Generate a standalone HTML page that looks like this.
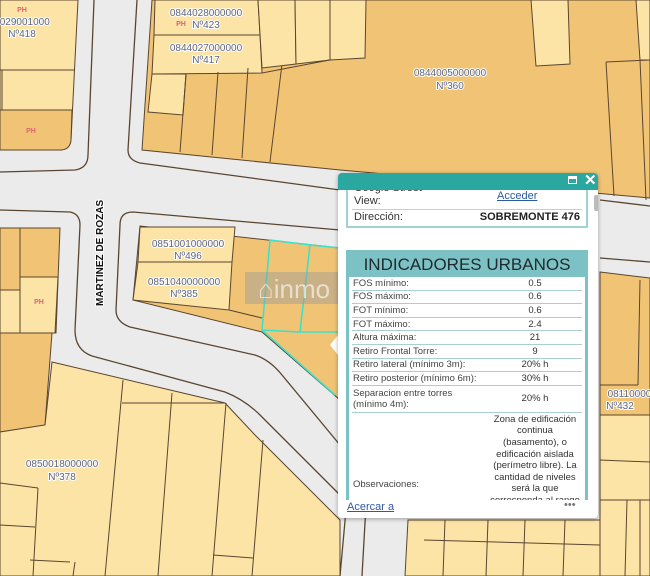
<!DOCTYPE html>
<html><head><meta charset="utf-8">
<style>
html,body{margin:0;padding:0;width:650px;height:576px;overflow:hidden;background:#ebebeb;font-family:"Liberation Sans",sans-serif}
svg{position:absolute;left:0;top:0}
.lbl{font-family:"Liberation Sans",sans-serif;font-size:10px;fill:#5b6580;stroke:#fff;stroke-width:2px;paint-order:stroke;text-anchor:middle}
.ph{font-size:7px;fill:#e0607a;font-weight:bold;text-anchor:middle}
#pop{position:absolute;left:338px;top:173px;width:260px;height:345px;background:#fff;border-radius:4px;box-shadow:0 1px 4px rgba(0,0,0,.35);overflow:hidden;font-size:10px;color:#444}
#hd{height:17px;background:#2aa79e;position:relative;z-index:2}
#box1{position:absolute;left:8px;top:17px;width:238px;height:36px;border:2px solid #9fd3d0;border-top:none}
#box2{position:absolute;left:8px;top:77px;width:236px;height:250px;border:3px solid #7cc2c4;border-bottom:none;background:#fff;overflow:hidden}
#box2 h2{margin:0;height:24px;background:#7cc2c4;font-size:17px;font-weight:normal;color:#1f2a30;text-align:center;line-height:24px}
table{border-collapse:collapse;width:230px;margin-left:3px;font-size:9.5px;color:#444}
td{border-bottom:1px solid #a9cfd0;padding:0 1px;height:12.6px;line-height:11px;vertical-align:middle}
td.v{text-align:center;width:92px;color:#333}
</style></head><body>
<svg width="650" height="576" viewBox="0 0 650 576">
<g stroke="#5a4630" stroke-width="1">
<path d="M0 0H78L71 140Q70 150 60 150H0Z" fill="#fce3a6"/>
<path d="M0 110H72L71 140Q70 150 60 150H0Z" fill="#f1c475"/>
<line x1="0" y1="70" x2="75" y2="70"/>
<line x1="2" y1="70" x2="2" y2="110"/>
<path d="M152 0H650V198L340 170L142 150Z" fill="#f1c475"/>
<path d="M155 0H258L260 35H154Z" fill="#fce3a6"/>
<path d="M154 35H260L262 73L152 74Z" fill="#fce3a6"/>
<path d="M152 74H186L183 115L148 112Z" fill="#fce3a6"/>
<line x1="186" y1="74" x2="180" y2="152"/>
<line x1="218" y1="72" x2="212" y2="155"/>
<line x1="248" y1="68" x2="242" y2="158"/>
<line x1="282" y1="64" x2="270" y2="162"/>
<path d="M258 0H295L296 64L262 68Z" fill="#fce3a6"/>
<path d="M295 0H330L330 60L296 64Z" fill="#fce3a6"/>
<line x1="262" y1="73" x2="340" y2="58"/>
<path d="M330 0H366L365 58L330 60Z" fill="#fce3a6"/>
<path d="M531 0H568L570 64L536 66Z" fill="#fce3a6"/>
<path d="M636 0H650V60H640Z" fill="#fce3a6"/>
<path d="M606 62L650 60M606 62L614 196M640 60L646 200" fill="none"/>
<path d="M600 200L650 206" fill="none" stroke-width="1.3"/>
<path d="M600 258L650 262" fill="none" stroke-width="1.3"/>
<path d="M600 272L650 278V576H600Z" fill="#f1c475"/>
<path d="M600 415H650V576H600Z" fill="#fce3a6"/>
<line x1="640" y1="280" x2="638" y2="385"/><line x1="600" y1="385" x2="638" y2="385"/>
<line x1="600" y1="460" x2="650" y2="462"/><line x1="600" y1="500" x2="650" y2="500"/>
<line x1="627" y1="500" x2="625" y2="576"/><line x1="640" y1="500" x2="640" y2="576"/>
<path d="M0 172L75 170Q88 168 88 155L94 0" fill="none" stroke-width="1.3"/>
<path d="M137 0L128 150Q128 160 140 163L340 190" fill="none" stroke-width="1.3"/>
<path d="M0 210L70 212Q80 214 80 225L75 330Q75 350 92 356L225 392Q245 400 260 415L340 495" fill="none" stroke-width="1.3"/>
<path d="M340 230L133 212Q120 212 120 225L116 310Q116 322 130 327L255 355Q270 360 282 375L340 445" fill="none" stroke-width="1.3"/>
<path d="M0 228H60L56 333L0 333Z" fill="#f1c475"/>
<path d="M20 277H58L55 333H20Z" fill="#fce3a6"/>
<line x1="20" y1="228" x2="20" y2="333"/>
<path d="M0 290H20V333H0Z" fill="#fce3a6"/>
<path d="M0 333H52L45 425L0 432Z" fill="#f1c475"/>
<path d="M52 362L225 403L255 435L340 520V576H0V432L45 425Z" fill="#fce3a6"/>
<line x1="123" y1="380" x2="105" y2="576"/>
<line x1="122" y1="403" x2="225" y2="403"/>
<line x1="172" y1="393" x2="158" y2="576"/>
<line x1="226" y1="403" x2="212" y2="576"/>
<line x1="263" y1="440" x2="252" y2="576"/>
<line x1="213" y1="555" x2="253" y2="558"/>
<line x1="0" y1="483" x2="38" y2="488"/><line x1="38" y1="488" x2="33" y2="576"/>
<line x1="0" y1="525" x2="35" y2="527"/>
<line x1="30" y1="560" x2="70" y2="562"/><line x1="75" y1="562" x2="73" y2="576"/>
<path d="M340 576L346 510M362 576L366 505" fill="none" stroke-width="1.3"/>
<path d="M405 576L408 520H600V576Z" fill="#fce3a6"/>
<line x1="424" y1="540" x2="600" y2="545"/>
<line x1="445" y1="520" x2="443" y2="576"/><line x1="488" y1="520" x2="486" y2="576"/>
<line x1="525" y1="520" x2="523" y2="576"/><line x1="565" y1="520" x2="563" y2="576"/>
<path d="M140 226L340 248V400L262 332L133 300Z" fill="#f1c475"/>
<path d="M140 227H235L232 262L138 262Z" fill="#fce3a6"/>
<path d="M138 262H232L229 310L133 300Z" fill="#fce3a6"/>
<path d="M229 310L262 318" fill="none"/>
</g>
<g fill="none" stroke="#3fe0c8" stroke-width="1.6">
<path d="M270 240L310 245L300 332L262 330Z"/>
<path d="M310 245L340 248V332L300 332"/>
<path d="M262 330L335 395"/>
</g>
<rect x="245" y="272" width="100" height="32" fill="#9a9a9a" opacity=".45"/>
<text x="258" y="298" font-size="26" fill="#fff" opacity=".6" font-family="Liberation Sans">⌂inmo</text>
<text class="lbl" x="22" y="25">8029001000</text><text class="lbl" x="22" y="37">Nº418</text>
<text class="ph" x="22" y="12">PH</text><text class="ph" x="31" y="133">PH</text>
<text class="lbl" x="206" y="16">0844028000000</text><text class="lbl" x="206" y="28">Nº423</text>
<text class="ph" x="181" y="26">PH</text>
<text class="lbl" x="206" y="51">0844027000000</text><text class="lbl" x="206" y="63">Nº417</text>
<text class="lbl" x="450" y="76">0844005000000</text><text class="lbl" x="450" y="89">Nº360</text>
<text class="lbl" x="188" y="247">0851001000000</text><text class="lbl" x="188" y="259">Nº496</text>
<text class="lbl" x="184" y="285">0851040000000</text><text class="lbl" x="184" y="297">Nº385</text>
<text class="ph" x="39" y="304">PH</text>
<text class="lbl" x="62" y="467">0850018000000</text><text class="lbl" x="62" y="480">Nº378</text>
<text class="lbl" x="635" y="397">0811000000</text><text class="lbl" x="620" y="409">Nº432</text>
<text x="103" y="306" transform="rotate(-90 103 306)" font-size="10" font-weight="bold" fill="#111" stroke="#fff" stroke-width="2" paint-order="stroke" font-family="Liberation Sans">MARTINEZ DE ROZAS</text>
<path d="M338 335L330 345L338 355Z" fill="#fff"/>
</svg>
<div id="pop">
<div id="hd"><span style="position:absolute;left:230px;top:3px;width:9px;height:8px;border:1.5px solid #fff;border-top-width:3px;box-sizing:border-box"></span><span style="position:absolute;left:246px;top:-2px;color:#fff;font-size:15px;font-weight:bold">✕</span></div>
<div id="box1">
<div style="position:absolute;left:6px;top:-8px;font-size:11px;color:#333">Google Street</div>
<div style="position:absolute;left:6px;top:5px;font-size:11px;color:#333">View:</div>
<div style="position:absolute;left:149px;top:0px;font-size:11px;color:#2b5aa0;text-decoration:underline">Acceder</div>
<div style="position:absolute;left:4px;right:4px;top:19px;border-top:1px solid #ccc"></div>
<div style="position:absolute;left:6px;top:21px;font-size:11px;color:#333">Dirección:</div>
<div style="position:absolute;right:6px;top:21px;font-size:11px;color:#222;font-weight:bold">SOBREMONTE 476</div>
</div>
<div style="position:absolute;left:256px;top:22px;width:5px;height:16px;background:#bbb;border-radius:2px"></div>
<div id="box2"><h2>INDICADORES URBANOS</h2>
<table>
<tr><td>FOS mínimo:</td><td class="v">0.5</td></tr>
<tr><td>FOS máximo:</td><td class="v">0.6</td></tr>
<tr><td>FOT mínimo:</td><td class="v">0.6</td></tr>
<tr><td>FOT máximo:</td><td class="v">2.4</td></tr>
<tr><td>Altura máxima:</td><td class="v">21</td></tr>
<tr><td>Retiro Frontal Torre:</td><td class="v">9</td></tr>
<tr><td>Retiro lateral (mínimo 3m):</td><td class="v">20% h</td></tr>
<tr><td>Retiro posterior (mínimo 6m):</td><td class="v">30% h</td></tr>
<tr><td style="height:26px">Separacion entre torres<br>(mínimo 4m):</td><td class="v">20% h</td></tr>
<tr><td style="vertical-align:top;border:none;padding-top:66px">Observaciones:</td><td class="v" style="border:none;line-height:11.6px;vertical-align:top;padding-top:1px">Zona de edificación continua (basamento), o edificación aislada (perímetro libre). La cantidad de niveles será la que corresponda al rango</td></tr>
</table></div>
<div style="position:absolute;left:0;top:327px;width:260px;height:18px;background:#fff"></div>
<div style="position:absolute;left:9px;top:328px;font-size:11px;color:#2b5aa0;text-decoration:underline">Acercar a</div>
<div style="position:absolute;left:226px;top:326px;font-size:11px;color:#777">•••</div>
</div>
</body></html>
